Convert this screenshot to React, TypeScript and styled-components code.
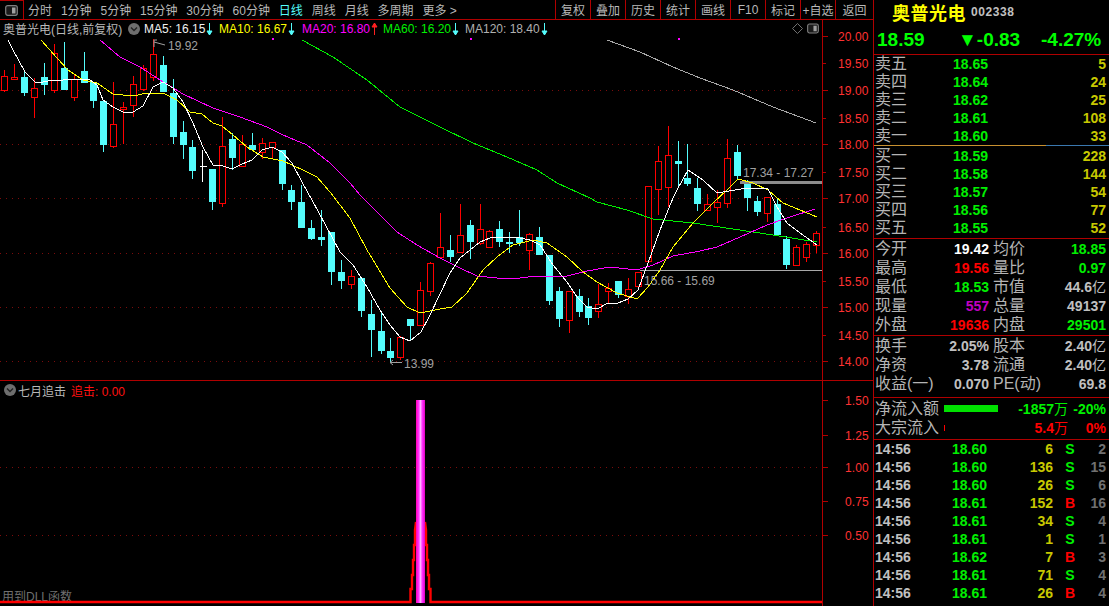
import React from "react";
import styled, { createGlobalStyle } from "styled-components";

const LATIN = `"Liberation Sans", "Noto Sans CJK SC", sans-serif`;
const RED_LINE = "#b00000";

const Global = createGlobalStyle`
  html, body { margin: 0; padding: 0; background: #000; overflow: hidden; }
  * { box-sizing: border-box; }
`;

const Page = styled.div`
  width: 1109px;
  height: 606px;
  display: flex;
  background: #000;
  overflow: hidden;
  font-family: ${LATIN};
`;

const LeftColumn = styled.div`
  width: 873px;
  display: flex;
  flex-direction: column;
`;

const Toolbar = styled.div`
  height: 20px;
  display: flex;
  align-items: stretch;
  border-bottom: 1px solid ${RED_LINE};
  font-size: 12px;
  color: #b8b8b8;
`;

const LayoutToggle = styled.div`
  width: 24px;
  display: flex;
  align-items: center;
  justify-content: center;
  border-right: 1px solid ${RED_LINE};
  border-top: 1px solid ${RED_LINE};
  margin-right: 4px;
`;

const PeriodList = styled.div`
  display: flex;
  align-items: center;
  gap: 8.9px;
  flex: 1;
  white-space: nowrap;
`;

const Period = styled.span<{ $active?: boolean }>`
  color: ${(p) => (p.$active ? "#54fcfc" : "#b8b8b8")};
`;

const ToolButton = styled.div<{ $wide?: boolean }>`
  width: ${(p) => (p.$wide ? 38 : 35)}px;
  display: flex;
  align-items: center;
  justify-content: center;
  border-left: 1px solid ${RED_LINE};
  white-space: nowrap;
`;

const Pane = styled.div<{ $h: number; $top?: boolean }>`
  height: ${(p) => p.$h}px;
  display: flex;
  border-top: ${(p) => (p.$top ? `1px solid ${RED_LINE}` : "none")};
`;

const MainCol = styled.div`
  width: 822px;
  display: flex;
  flex-direction: column;
`;

const AxisCol = styled.div`
  width: 51px;
  border-left: 1px solid ${RED_LINE};
`;

const Legend = styled.div<{ $h: number }>`
  height: ${(p) => p.$h}px;
  display: flex;
  align-items: center;
  font-size: 12px;
  white-space: nowrap;
`;

const LegendTitle = styled.span`
  width: 128px;
  padding-left: 3px;
  color: #b8b8b8;
`;

const Series = styled.span<{ $w: number; $c: string }>`
  width: ${(p) => p.$w}px;
  display: flex;
  align-items: center;
  gap: 1px;
  color: ${(p) => p.$c};
`;

const SeriesList = styled.div`
  display: flex;
  margin-left: 4px;
`;

const CornerIcons = styled.div`
  margin-left: auto;
  display: flex;
  align-items: center;
  gap: 4px;
  padding-right: 3px;
`;

const SubName = styled.span`
  margin-left: 2px;
  width: 53px;
  color: #b8b8b8;
`;

const SubValue = styled.span`
  color: #ff1010;
`;

const ChartSvg = styled.svg`
  display: block;
  flex: 1;
`;

const AxisSvg = styled.svg`
  display: block;
`;

const AxisLabel = styled.text`
  font-family: ${LATIN};
  font-size: 12px;
  fill: #ff3232;
  letter-spacing: 0.1px;
`;

const NoteText = styled.text`
  font-family: ${LATIN};
  font-size: 12px;
  fill: #a0a0a0;
`;

const FootText = styled.text`
  font-family: ${LATIN};
  font-size: 12px;
  fill: #707070;
`;

/* right panel */
const RightColumn = styled.div`
  width: 236px;
  border-left: 1px solid ${RED_LINE};
  display: flex;
  flex-direction: column;
`;

const Section = styled.div<{ $h: number; $pad?: number }>`
  height: ${(p) => p.$h}px;
  padding-top: ${(p) => p.$pad ?? 0}px;
  border-bottom: 1px solid ${RED_LINE};
`;

const NameRow = styled.div`
  height: 24px;
  display: flex;
  align-items: center;
  padding-left: 18px;
`;

const StockName = styled.span`
  font-size: 18px;
  font-weight: 700;
  color: #ffff00;
  letter-spacing: 0.5px;
`;

const StockCode = styled.span`
  margin-left: 5px;
  font-size: 12px;
  font-weight: 700;
  color: #c0c0c0;
  letter-spacing: 0.6px;
`;

const QuoteRow = styled.div`
  margin-top: 4px;
  height: 24px;
  display: grid;
  grid-template-columns: 81px 83px 64px;
  align-items: center;
  padding-left: 3px;
  font-size: 19px;
  font-weight: 700;
  color: #00ff00;
`;

const QuoteCell = styled.span`
  white-space: nowrap;
`;

const BookRow = styled.div`
  height: 18px;
  display: grid;
  grid-template-columns: 78px 60px 1fr;
  align-items: center;
  padding: 0 3px 0 1px;
`;

const Label = styled.span`
  font-size: 16px;
  line-height: 16px;
  color: #b4b4b4;
  white-space: nowrap;
`;

const Num = styled.span<{ $c?: string; $right?: boolean }>`
  font-size: 14px;
  line-height: 16px;
  font-weight: 700;
  color: ${(p) => p.$c ?? "#c0c0c0"};
  text-align: ${(p) => (p.$right ? "right" : "left")};
  white-space: nowrap;
`;

const Unit = styled.span`
  font-weight: 400;
`;

const OrderDivider = styled.div`
  height: 1px;
  background: linear-gradient(to right, #c89030 0 172px, #3a78b0 172px);
`;

const BuyBlock = styled.div`
  padding-top: 1px;
`;

const StatRow = styled.div`
  height: 19px;
  display: grid;
  grid-template-columns: 34px 80px 36px 1fr;
  column-gap: 0;
  align-items: center;
  padding: 0 3px 0 1px;
`;

const SecondLabel = styled(Label)`
  margin-left: 4px;
`;

const FlowRow = styled.div`
  height: 19px;
  display: grid;
  grid-template-columns: 69px 124px 1fr;
  align-items: center;
  padding: 0 3px 0 1px;
`;

const FlowMid = styled.div`
  display: flex;
  align-items: center;
  justify-content: space-between;
`;

const FlowBar = styled.div<{ $w: number; $h: number; $c: string }>`
  width: ${(p) => p.$w}px;
  height: ${(p) => p.$h}px;
  background: ${(p) => p.$c};
`;

const TickRow = styled.div`
  height: 18px;
  display: grid;
  grid-template-columns: 77px 56px 45px 34px 1fr;
  align-items: center;
  padding: 0 3px 0 1px;
`;

const SideMark = styled(Num)`
  text-align: center;
`;

const candles: [number, number, number, number, string][] = [
  [70, 76, 90, 92, "r"], [64, 77, 79, 79, "r"], [71, 77, 93, 96, "c"], [78, 88, 97, 118, "r"], [63, 77, 85, 95, "c"],
  [44, 53, 90, 93, "r"], [42, 68, 90, 90, "c"], [75, 79, 97, 101, "r"], [52, 71, 83, 83, "c"], [82, 82, 101, 108, "c"],
  [101, 101, 145, 152, "c"], [82, 124, 146, 148, "r"], [102, 107, 109, 144, "r"], [76, 84, 105, 117, "r"], [65, 68, 89, 91, "r"],
  [39, 54, 77, 81, "r"], [56, 65, 92, 92, "c"], [79, 93, 137, 144, "c"], [121, 132, 145, 159, "c"], [140, 147, 171, 179, "c"],
  [150, 166, 166, 182, "w"], [169, 169, 202, 210, "c"], [117, 146, 203, 207, "r"], [133, 139, 158, 170, "c"], [135, 144, 166, 167, "r"],
  [133, 145, 150, 150, "c"], [138, 143, 152, 159, "r"], [142, 142, 147, 159, "r"], [150, 150, 184, 190, "c"], [185, 190, 202, 210, "c"],
  [185, 202, 228, 228, "c"], [220, 228, 239, 240, "c"], [210, 237, 240, 246, "c"], [232, 232, 272, 285, "c"], [260, 272, 281, 289, "c"],
  [270, 276, 284, 289, "r"], [278, 278, 311, 317, "c"], [300, 314, 330, 357, "c"], [312, 331, 351, 354, "c"], [338, 351, 358, 363, "c"],
  [336, 337, 357, 360, "r"], [319, 319, 326, 341, "c"], [282, 290, 325, 325, "r"], [262, 263, 291, 296, "r"], [213, 247, 257, 258, "r"],
  [235, 250, 257, 262, "c"], [204, 235, 252, 253, "r"], [220, 225, 242, 259, "c"], [204, 229, 243, 245, "r"], [230, 231, 247, 248, "r"],
  [221, 229, 242, 247, "c"], [232, 242, 243, 253, "c"], [210, 237, 243, 246, "c"], [233, 234, 250, 270, "r"], [227, 237, 255, 255, "c"],
  [255, 255, 301, 305, "c"], [287, 291, 319, 327, "c"], [291, 291, 320, 333, "r"], [289, 296, 312, 317, "c"], [298, 306, 318, 325, "c"],
  [284, 304, 311, 318, "r"], [283, 288, 291, 304, "r"], [281, 281, 295, 298, "c"], [278, 289, 296, 304, "r"], [272, 272, 286, 290, "r"],
  [186, 186, 261, 262, "r"], [146, 161, 189, 215, "r"], [126, 155, 187, 207, "r"], [141, 161, 164, 186, "c"], [144, 178, 184, 186, "c"],
  [178, 188, 204, 211, "c"], [194, 204, 210, 210, "r"], [190, 202, 207, 223, "r"], [139, 158, 203, 208, "r"], [145, 152, 176, 180, "c"],
  [180, 184, 198, 211, "c"], [196, 201, 212, 216, "c"], [197, 197, 213, 222, "r"], [199, 204, 235, 236, "c"], [236, 239, 265, 269, "c"],
  [245, 247, 265, 266, "r"], [242, 244, 257, 262, "r"], [231, 233, 245, 253, "r"],
];

const ma5 = "8,40 13,50 25,72 35,82 43,82 53,80 63,80 77,79 90,80 97,85 103,100 113,107 123,112 133,112 143,106 153,87 163,82 173,88 183,102 193,123 203,147 213,165 223,166 232,169 242,164 252,160 262,150 272,147 282,152 292,163 302,182 312,200 326,226 340,252 353,265 367,287 380,310 390,325 400,337 410,341 421,332 430,315 440,294 450,273 460,258 470,250 480,242 490,238 500,237 520,238 530,240 540,245 553,265 567,282 577,297 587,307 597,309 608,303 618,303 628,299 638,290 648,263 660,230 673,198 677,190 688,170 703,180 717,193 747,188 768,189 777,207 787,223 800,233 810,240 817,245";
const ma10 = "41,40 57,58 68,70 83,80 97,83 113,94 133,96 147,93 163,93 177,100 190,112 202,114 213,123 222,126 233,135 247,147 263,157 283,161 303,170 317,177 330,192 350,218 367,250 390,288 407,307 420,313 440,309 452,307 467,293 483,270 497,257 513,245 533,240 547,243 567,257 583,272 597,282 617,293 637,299 648,287 660,270 673,247 693,223 713,203 727,190 738,179 753,183 768,190 783,203 800,210 817,217";
const ma20 = "100,40 120,57 140,67 160,80 183,94 213,108 240,117 267,127 283,135 307,145 330,163 350,183 360,195 377,212 397,232 417,245 440,258 460,268 477,276 497,278 520,278 537,276 567,276 587,271 610,267 637,270 653,265 673,256 700,251 717,247 740,237 767,225 787,218 815,209";
const ma60 = "302,40 333,57 367,80 400,107 440,127 473,143 507,157 537,170 557,183 590,198 597,202 627,210 653,219 693,223 733,229 773,235 817,242";
const ma120 = "607,40 640,52 673,67 700,78 733,90 773,107 816,123";

const Arrow: React.FC<{ up?: boolean; color: string }> = ({ up, color }) => (
  <svg width="7" height="14" viewBox="0 0 7 14">
    {up ? (
      <path d="M3.5 1V13M1 5L3.5 1L6 5Z" stroke={color} fill={color} strokeWidth="1" />
    ) : (
      <path d="M3.5 1V13M1 9L3.5 13L6 9Z" stroke={color} fill={color} strokeWidth="1" />
    )}
  </svg>
);

const Caret: React.FC = () => (
  <svg width="12" height="12" viewBox="0 0 12 12">
    <circle cx="6" cy="6" r="6" fill="#6e6e6e" />
    <path d="M3 4.5L6 7.5L9 4.5" stroke="#222" strokeWidth="1.4" fill="none" />
  </svg>
);

const PanelIcon: React.FC<{ w: number; h: number }> = ({ w, h }) => (
  <svg width={w} height={h} viewBox="0 0 13 11">
    <rect x="0.7" y="0.7" width="11.6" height="9.6" rx="2" fill="#1a1a1a" stroke="#808080" strokeWidth="1.2" />
    <rect x="7" y="2.5" width="3.5" height="6" fill="#a0a0a0" />
  </svg>
);

const Diamond: React.FC = () => (
  <svg width="11" height="11" viewBox="0 0 11 11">
    <path d="M5.5 0.5L10.5 5.5L5.5 10.5L0.5 5.5Z" fill="none" stroke="#707070" />
  </svg>
);

const DOT = "#7c0c0c";

const Candle: React.FC<{ i: number; d: [number, number, number, number, string] }> = ({ i, d }) => {
  const x = Math.round(4.3 + i * 9.9) + 0.5;
  const [wt, bt, bb, wb, k] = d;
  const c = k === "r" ? "#ff0000" : k === "w" ? "#ffffff" : "#54fcfc";
  if (k === "w") {
    return (
      <g stroke={c} shapeRendering="crispEdges">
        <line x1={x} x2={x} y1={wt} y2={wb} />
        <line x1={x - 3} x2={x + 4} y1={bt + 0.5} y2={bt + 0.5} />
      </g>
    );
  }
  return (
    <g shapeRendering="crispEdges">
      <line x1={x} x2={x} y1={wt} y2={wb} stroke={c} />
      {k === "r" ? (
        <rect x={x - 3} y={bt + 0.5} width={6} height={Math.max(bb - bt, 1)} fill="#000" stroke={c} />
      ) : (
        <rect x={x - 3.5} y={bt} width={7} height={Math.max(bb - bt, 2)} fill={c} />
      )}
    </g>
  );
};

const PriceChart: React.FC = () => (
  <ChartSvg width={822} height={343} viewBox="0 37 822 343">
    {[90.5, 144.5, 198.5, 253.5, 307.5, 361.5].map((y) => (
      <line key={y} x1={0} x2={822} y1={y} y2={y} stroke={DOT} strokeDasharray="1 5" shapeRendering="crispEdges" />
    ))}
    {candles.map((d, i) => (
      <Candle key={i} i={i} d={d} />
    ))}
    <rect x={740} y={181} width={82} height={3} fill="#8c8c8c" />
    <line x1={640} x2={822} y1={270.5} y2={270.5} stroke="#a8a8a8" shapeRendering="crispEdges" />
    <g fill="none" strokeWidth="1" shapeRendering="crispEdges">
      <polyline points={ma120} stroke="#a8a8a8" />
      <polyline points={ma60} stroke="#00f000" />
      <polyline points={ma20} stroke="#ff00ff" />
      <polyline points={ma10} stroke="#ffff00" />
      <polyline points={ma5} stroke="#ffffff" />
    </g>
    {[272, 470, 678].map((x) => (
      <rect key={x} x={x} y={38} width={2} height={2} fill="#ff00ff" />
    ))}
    <path d="M154 47V40H157M154 42L165 45" stroke="#a0a0a0" fill="none" />
    <NoteText x={168} y={50}>19.92</NoteText>
    <path d="M390 362.5H402M390 362.5L393 360M390 362.5L393 365" stroke="#a0a0a0" fill="none" />
    <NoteText x={404} y={368}>13.99</NoteText>
    <NoteText x={743} y={177}>17.34 - 17.27</NoteText>
    <NoteText x={644} y={285}>15.66 - 15.69</NoteText>
  </ChartSvg>
);

const priceTicks: [number, string, boolean][] = [
  [36.5, "20.00", true], [63.5, "19.50", false], [90.5, "19.00", true], [118, "18.50", false], [144.5, "18.00", true],
  [172, "17.50", false], [198.5, "17.00", true], [227, "16.50", false], [253.5, "16.00", true], [281, "15.50", false],
  [307.5, "15.00", true], [335, "14.50", false], [361.5, "14.00", true],
];

const PriceAxis: React.FC = () => (
  <AxisSvg width={50} height={360} viewBox="823 20 50 360">
    {priceTicks.map(([y, t, major]) => (
      <g key={t}>
        <line x1={823} x2={major ? 828 : 826} y1={Math.floor(y) + 0.5} y2={Math.floor(y) + 0.5} stroke={RED_LINE} shapeRendering="crispEdges" />
        <AxisLabel x={838} y={y + 4.5}>{t}</AxisLabel>
      </g>
    ))}
  </AxisSvg>
);

const leftSteps = "0,602 410.5,602 410.5,589 412,589 412,575 413,575 413,560 414,560 414,545 415,545 415,530 416,522";
const rightSteps = "425,522 426,530 426,545 427,545 427,560 428,560 428,575 429,575 429,589 430.5,589 430.5,602 822,602";

const SignalChart: React.FC = () => (
  <ChartSvg width={822} height={207} viewBox="0 399 822 207">
    <defs>
      <linearGradient id="signalBar" x1="0" x2="1" y1="0" y2="0">
        <stop offset="0" stopColor="#ff00b0" />
        <stop offset="0.3" stopColor="#ff30ff" />
        <stop offset="0.5" stopColor="#ffb0ff" />
        <stop offset="0.7" stopColor="#ff30ff" />
        <stop offset="1" stopColor="#e000c0" />
      </linearGradient>
    </defs>
    {[467.5, 535.5].map((y) => (
      <line key={y} x1={0} x2={822} y1={y} y2={y} stroke={DOT} strokeDasharray="1 5" shapeRendering="crispEdges" />
    ))}
    <FootText x={2} y={601}>用到DLL函数</FootText>
    <polyline points={leftSteps} stroke="#ff0000" strokeWidth="2.4" fill="none" />
    <polyline points={rightSteps} stroke="#ff0000" strokeWidth="2.4" fill="none" />
    <rect x={416} y={400} width={9} height={203} fill="url(#signalBar)" />
  </ChartSvg>
);

const signalTicks: [number, string][] = [[400, "1.50"], [435, "1.25"], [467, "1.00"], [501, "0.75"], [535, "0.50"]];

const SignalAxis: React.FC = () => (
  <AxisSvg width={50} height={225} viewBox="823 381 50 225">
    {signalTicks.map(([y, t]) => (
      <g key={t}>
        <line x1={823} x2={828} y1={y + 0.5} y2={y + 0.5} stroke={RED_LINE} shapeRendering="crispEdges" />
        <AxisLabel x={845} y={y + 4.5}>{t}</AxisLabel>
      </g>
    ))}
  </AxisSvg>
);

const periods = ["分时", "1分钟", "5分钟", "15分钟", "30分钟", "60分钟", "日线", "周线", "月线", "多周期", "更多 >"];
const tools = ["复权", "叠加", "历史", "统计", "画线", "F10", "标记", "+自选"];

const G = "#00f000";
const Y = "#c8c800";
const W = "#c0c0c0";
const R = "#ff0000";

const sells: [string, string, string][] = [["卖五", "18.65", "5"], ["卖四", "18.64", "24"], ["卖三", "18.62", "25"], ["卖二", "18.61", "108"], ["卖一", "18.60", "33"]];
const buys: [string, string, string][] = [["买一", "18.59", "228"], ["买二", "18.58", "144"], ["买三", "18.57", "54"], ["买四", "18.56", "77"], ["买五", "18.55", "52"]];

type Stat = [string, React.ReactNode, string, string, React.ReactNode, string];
const stats: Stat[] = [
  ["今开", "19.42", "#ffffff", "均价", "18.85", G],
  ["最高", "19.56", R, "量比", "0.97", G],
  ["最低", "18.53", G, "市值", <>44.6<Unit>亿</Unit></>, W],
  ["现量", "557", "#c000c0", "总量", "49137", W],
  ["外盘", "19636", R, "内盘", "29501", G],
];
const stats2: Stat[] = [
  ["换手", "2.05%", W, "股本", <>2.40<Unit>亿</Unit></>, W],
  ["净资", "3.78", W, "流通", <>2.40<Unit>亿</Unit></>, W],
  ["收益(一)", "0.070", W, "PE(动)", "69.8", W],
];

const ticks: [string, string, string, string][] = [
  ["18.60", "6", "S", "2"], ["18.60", "136", "S", "15"], ["18.60", "26", "S", "6"], ["18.61", "152", "B", "16"], ["18.61", "34", "S", "4"],
  ["18.61", "1", "S", "1"], ["18.62", "7", "B", "3"], ["18.61", "71", "S", "4"], ["18.61", "26", "B", "4"],
];

const StatRows: React.FC<{ rows: Stat[] }> = ({ rows }) => (
  <>
    {rows.map(([a, v, c, b, w, d]) => (
      <StatRow key={a}>
        <Label>{a}</Label>
        <Num $c={c} $right>{v}</Num>
        <SecondLabel>{b}</SecondLabel>
        <Num $c={d} $right>{w}</Num>
      </StatRow>
    ))}
  </>
);

const Book: React.FC<{ rows: [string, string, string][] }> = ({ rows }) => (
  <>
    {rows.map(([l, p, q]) => (
      <BookRow key={l}>
        <Label>{l}</Label>
        <Num $c={G}>{p}</Num>
        <Num $c={Y} $right>{q}</Num>
      </BookRow>
    ))}
  </>
);

export default function App() {
  return (
    <Page>
      <Global />
      <LeftColumn>
        <Toolbar>
          <LayoutToggle>
            <PanelIcon w={13} h={11} />
          </LayoutToggle>
          <PeriodList>
            {periods.map((p) => (
              <Period key={p} $active={p === "日线"}>{p}</Period>
            ))}
          </PeriodList>
          {tools.map((t) => (
            <ToolButton key={t}>{t}</ToolButton>
          ))}
          <ToolButton $wide>返回</ToolButton>
        </Toolbar>
        <Pane $h={360}>
          <MainCol>
            <Legend $h={17}>
              <LegendTitle>奥普光电(日线,前复权)</LegendTitle>
              <Caret />
              <SeriesList>
                <Series $w={75} $c="#f0f0f0">MA5: 16.15<Arrow color="#54fcfc" /></Series>
                <Series $w={83} $c="#ffff00">MA10: 16.67<Arrow color="#54fcfc" /></Series>
                <Series $w={81} $c="#ff00ff">MA20: 16.80<Arrow up color="#ff2020" /></Series>
                <Series $w={82} $c="#00f000">MA60: 16.20<Arrow color="#54fcfc" /></Series>
                <Series $w={85} $c="#b0b0b0">MA120: 18.40<Arrow color="#54fcfc" /></Series>
              </SeriesList>
              <CornerIcons>
                <Diamond />
                <PanelIcon w={12} h={11} />
              </CornerIcons>
            </Legend>
            <PriceChart />
          </MainCol>
          <AxisCol>
            <PriceAxis />
          </AxisCol>
        </Pane>
        <Pane $h={226} $top>
          <MainCol>
            <Legend $h={18}>
              <SeriesList>
                <Caret />
              </SeriesList>
              <SubName>七月追击</SubName>
              <SubValue>追击: 0.00</SubValue>
            </Legend>
            <SignalChart />
          </MainCol>
          <AxisCol>
            <SignalAxis />
          </AxisCol>
        </Pane>
      </LeftColumn>
      <RightColumn>
        <Section $h={55}>
          <NameRow>
            <StockName>奥普光电</StockName>
            <StockCode>002338</StockCode>
          </NameRow>
          <QuoteRow>
            <QuoteCell>18.59</QuoteCell>
            <QuoteCell>▼-0.83</QuoteCell>
            <QuoteCell>-4.27%</QuoteCell>
          </QuoteRow>
        </Section>
        <Book rows={sells} />
        <OrderDivider />
        <Section $h={93}>
          <BuyBlock>
            <Book rows={buys} />
          </BuyBlock>
        </Section>
        <Section $h={97}>
          <StatRows rows={stats} />
        </Section>
        <Section $h={62}>
          <StatRows rows={stats2} />
        </Section>
        <Section $h={42} $pad={1}>
          <FlowRow>
            <Label>净流入额</Label>
            <FlowMid>
              <FlowBar $w={54} $h={7} $c="#00e000" />
              <Num $c={G} $right>-1857<Unit>万</Unit></Num>
            </FlowMid>
            <Num $c={G} $right>-20%</Num>
          </FlowRow>
          <FlowRow>
            <Label>大宗流入</Label>
            <FlowMid>
              <FlowBar $w={1} $h={6} $c="#ff0000" />
              <Num $c={R} $right>5.4<Unit>万</Unit></Num>
            </FlowMid>
            <Num $c={R} $right>0%</Num>
          </FlowRow>
        </Section>
        {ticks.map(([p, q, s, n], i) => (
          <TickRow key={i}>
            <Num>14:56</Num>
            <Num $c={G}>{p}</Num>
            <Num $c={Y} $right>{q}</Num>
            <SideMark $c={s === "S" ? G : R}>{s}</SideMark>
            <Num $c="#707070" $right>{n}</Num>
          </TickRow>
        ))}
      </RightColumn>
    </Page>
  );
}
